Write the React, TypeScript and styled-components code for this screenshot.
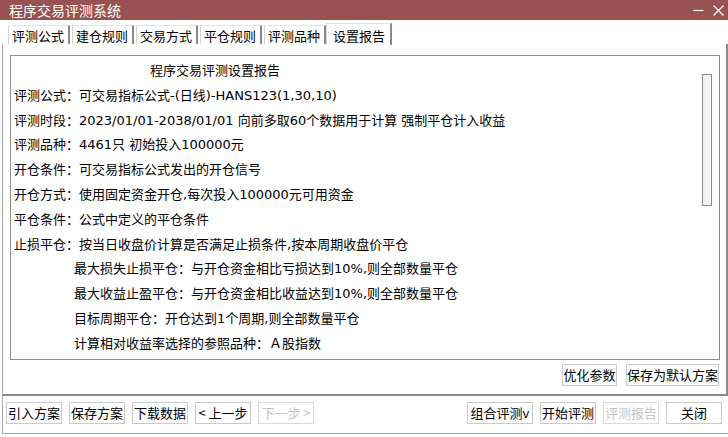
import React from "react";
import styled, { createGlobalStyle } from "styled-components";

const GlobalStyle = createGlobalStyle`
  html, body {
    margin: 0;
    padding: 0;
    background: #ffffff;
  }
  body {
    font-family: "Noto Sans CJK SC", "Noto Sans", "Liberation Sans", sans-serif;
    color: #000;
  }
`;

const Window = styled.div`
  width: 728px;
  height: 437px;
  display: flex;
  flex-direction: column;
  background: #ffffff;
  overflow: hidden;
`;

const TitleBar = styled.div`
  height: 20px;
  flex: none;
  display: flex;
  align-items: center;
  justify-content: space-between;
  background: #985251;
  color: #ffffff;
  font-size: 14px;
  line-height: 20px;
  padding-left: 9px;
`;

const TitleControls = styled.div`
  display: flex;
  align-items: center;
  gap: 9px;
  padding-right: 4px;
`;

const Body = styled.div`
  margin-left: 2px;
  display: flex;
  flex-direction: column;
`;

const TabStrip = styled.div`
  height: 24px;
  display: flex;
  align-items: flex-end;
  gap: 2px;
  padding-left: 6px;
  position: relative;
  z-index: 1;
`;

const Tab = styled.div<{ $active?: boolean }>`
  box-sizing: border-box;
  width: ${(p) => (p.$active ? 66 : 62)}px;
  height: ${(p) => (p.$active ? 22 : 19)}px;
  margin-bottom: ${(p) => (p.$active ? -1 : 0)}px;
  margin-left: ${(p) => (p.$active ? -2 : 0)}px;
  padding: ${(p) => (p.$active ? "5px 0 0 6px" : "3px 0 0 3px")};
  border-top: 1px solid #e3e3e3;
  border-left: 1px solid #d6d6d6;
  border-right: 2px solid #8a8a8a;
  background: #ffffff;
  font-size: 13px;
  line-height: 14px;
  white-space: nowrap;
  overflow: hidden;
`;

const TabPage = styled.div`
  box-sizing: border-box;
  height: 352px;
  border-left: 1px solid #a8a8a8;
  border-right: 2px solid #8a8a8a;
  border-bottom: 2px solid #8a8a8a;
  padding: 11px 6px 0 7px;
  display: flex;
  flex-direction: column;
`;

const ReportBox = styled.div`
  position: relative;
  box-sizing: border-box;
  height: 305px;
  border: 1px solid #8c8c8c;
  padding: 3px 0 0 3px;
  overflow: hidden;
  font-family: "DejaVu Sans", "Noto Sans CJK SC", sans-serif;
  font-size: 13px;
  white-space: nowrap;
`;

const ReportLine = styled.div<{ $indent?: number }>`
  height: 24.8px;
  line-height: 24.8px;
  padding-left: ${(p) => p.$indent ?? 0}px;
`;

const ScrollThumb = styled.div`
  position: absolute;
  left: 691px;
  top: 18px;
  width: 8px;
  height: 130px;
  border: 1px solid #8a8a8a;
  background: #f3f2f0;
`;

const ActionRow = styled.div`
  display: flex;
  justify-content: flex-end;
  gap: 9px;
  margin-top: 4px;
  padding-right: 1px;
`;

const BottomBar = styled.div`
  box-sizing: border-box;
  height: 38px;
  border-left: 1px solid #a8a8a8;
  border-bottom: 1px solid #a8a8a8;
  display: flex;
  justify-content: space-between;
  padding: 6px 6px 0 3px;
`;

const ButtonGroup = styled.div`
  display: flex;
  gap: 7px;
`;

const Button = styled.button<{ $w?: number }>`
  box-sizing: border-box;
  width: ${(p) => p.$w ?? 56}px;
  height: 22px;
  padding: 0;
  border: 1px solid #cacaca;
  background: #ffffff;
  font-family: inherit;
  font-size: 13px;
  line-height: 20px;
  color: #000;
  white-space: nowrap;

  &:disabled {
    color: #c4c4c4;
    border-color: #dadada;
  }
`;

const reportLines: { text: string; indent?: number }[] = [
  { text: "程序交易评测设置报告", indent: 136 },
  { text: "评测公式：可交易指标公式-(日线)-HANS123(1,30,10)" },
  { text: "评测时段：2023/01/01-2038/01/01 向前多取60个数据用于计算 强制平仓计入收益" },
  { text: "评测品种：4461只 初始投入100000元" },
  { text: "开仓条件：可交易指标公式发出的开仓信号" },
  { text: "开仓方式：使用固定资金开仓,每次投入100000元可用资金" },
  { text: "平仓条件：公式中定义的平仓条件" },
  { text: "止损平仓：按当日收盘价计算是否满足止损条件,按本周期收盘价平仓" },
  { text: "最大损失止损平仓：与开仓资金相比亏损达到10%,则全部数量平仓", indent: 60 },
  { text: "最大收益止盈平仓：与开仓资金相比收益达到10%,则全部数量平仓", indent: 60 },
  { text: "目标周期平仓：开仓达到1个周期,则全部数量平仓", indent: 60 },
  { text: "计算相对收益率选择的参照品种：Ａ股指数", indent: 60 },
];

const tabs = ["评测公式", "建仓规则", "交易方式", "平仓规则", "评测品种", "设置报告"];

export default function App() {
  return (
    <Window>
      <GlobalStyle />
      <TitleBar>
        <span>程序交易评测系统</span>
        <TitleControls>
          <svg width="11" height="11" viewBox="0 0 11 11">
            <line x1="0.5" y1="5.5" x2="10.5" y2="5.5" stroke="#fff" strokeWidth="1.2" />
          </svg>
          <svg width="11" height="11" viewBox="0 0 11 11">
            <path d="M0.5 0.5 L10.5 10.5 M10.5 0.5 L0.5 10.5" stroke="#fff" strokeWidth="1.2" />
          </svg>
        </TitleControls>
      </TitleBar>
      <Body>
        <TabStrip>
          {tabs.map((t, i) => (
            <Tab key={t} $active={i === tabs.length - 1}>
              {t}
            </Tab>
          ))}
        </TabStrip>
        <TabPage>
          <ReportBox>
            {reportLines.map((l, i) => (
              <ReportLine key={i} $indent={l.indent}>
                {l.text}
              </ReportLine>
            ))}
            <ScrollThumb />
          </ReportBox>
          <ActionRow>
            <Button $w={55}>优化参数</Button>
            <Button $w={93}>保存为默认方案</Button>
          </ActionRow>
        </TabPage>
        <BottomBar>
          <ButtonGroup>
            <Button>引入方案</Button>
            <Button>保存方案</Button>
            <Button>下载数据</Button>
            <Button>&lt; 上一步</Button>
            <Button disabled>下一步 &gt;</Button>
          </ButtonGroup>
          <ButtonGroup>
            <Button $w={66}>组合评测v</Button>
            <Button>开始评测</Button>
            <Button disabled>评测报告</Button>
            <Button>关闭</Button>
          </ButtonGroup>
        </BottomBar>
      </Body>
    </Window>
  );
}
